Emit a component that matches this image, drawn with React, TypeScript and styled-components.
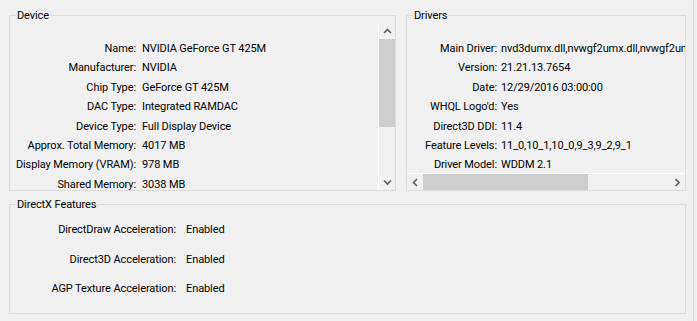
import React from "react";
import styled, { createGlobalStyle } from "styled-components";

const GlobalStyle = createGlobalStyle`
  html, body {
    margin: 0;
    padding: 0;
    background: #f0f0f0;
  }
  body {
    font-family: Roboto, "Liberation Sans", Arial, sans-serif;
    font-size: 11px;
    letter-spacing: -0.1px;
    color: #000;
  }
`;

const Page = styled.div`
  width: 694px;
  height: 321px;
  box-sizing: border-box;
  border-right: 1px solid #dadada;
  padding: 8px 0 0 9px;
  display: grid;
  grid-template-columns: 387px 280px;
  grid-template-rows: auto auto;
  column-gap: 10px;
  row-gap: 6px;
  align-content: start;
`;

const Group = styled.fieldset<{ $span?: boolean }>`
  margin: 0;
  padding: 0;
  min-width: 0;
  border: 1px solid #dcdcdc;
  ${(p) => (p.$span ? "grid-column: 1 / span 2;" : "")}
`;

const Legend = styled.legend`
  margin-left: 6px;
  padding: 0 1px;
  line-height: 15px;
  font-size: 11px;
`;

const ListBox = styled.div`
  height: 167px;
  display: flex;
  flex-direction: column;
  overflow: hidden;
`;

const ListRow = styled.div`
  flex: 1;
  display: flex;
  min-height: 0;
`;

const Rows = styled.div<{ $label: number; $gap: number }>`
  flex: 1;
  min-width: 0;
  overflow: hidden;
  padding-top: 16px;
  display: grid;
  grid-template-columns: ${(p) => p.$label}px max-content;
  column-gap: ${(p) => p.$gap}px;
  grid-auto-rows: 19.4px;
  align-content: start;
  line-height: 19.4px;
  white-space: nowrap;
`;

const Label = styled.div`
  text-align: right;
  white-space: nowrap;
`;

const Value = styled.div`
  white-space: nowrap;
`;

const VScroll = styled.div`
  width: 16px;
  border-left: 1px solid #ffffff;
  display: flex;
  flex-direction: column;
`;

const HScroll = styled.div`
  height: 16px;
  border-top: 1px solid #ffffff;
  display: flex;
  flex-shrink: 0;
`;

const ArrowButton = styled.div`
  width: 16px;
  height: 16px;
  flex-shrink: 0;
  display: flex;
  align-items: center;
  justify-content: center;
`;

const TrackV = styled.div`
  flex: 1;
  display: flex;
  flex-direction: column;
`;

const TrackH = styled.div`
  flex: 1;
  display: flex;
`;

const Thumb = styled.div<{ $length: number; $horizontal?: boolean }>`
  background: #cdcdcd;
  ${(p) =>
    p.$horizontal
      ? `width: ${p.$length}px; height: 16px;`
      : `height: ${p.$length}px; width: 16px;`}
`;

const Features = styled.div`
  height: 101px;
  box-sizing: border-box;
  padding-top: 3px;
  display: grid;
  grid-template-columns: 166px max-content;
  column-gap: 10px;
  grid-auto-rows: 29.5px;
  align-content: start;
  line-height: 29.5px;
`;

type Dir = "up" | "down" | "left" | "right";
const arrowPaths: Record<Dir, string> = {
  up: "M1 5 L4.5 1.5 L8 5",
  down: "M1 1.5 L4.5 5 L8 1.5",
  left: "M5 1 L1.5 4.5 L5 8",
  right: "M1.5 1 L5 4.5 L1.5 8",
};

const Arrow = ({ dir }: { dir: Dir }) => {
  const vertical = dir === "up" || dir === "down";
  return (
    <svg
      width={vertical ? 9 : 7}
      height={vertical ? 7 : 9}
      viewBox={vertical ? "0 0 9 7" : "0 0 7 9"}
    >
      <path d={arrowPaths[dir]} fill="none" stroke="#606060" strokeWidth="1.7" />
    </svg>
  );
};

const device: [string, string][] = [
  ["Name:", "NVIDIA GeForce GT 425M"],
  ["Manufacturer:", "NVIDIA"],
  ["Chip Type:", "GeForce GT 425M"],
  ["DAC Type:", "Integrated RAMDAC"],
  ["Device Type:", "Full Display Device"],
  ["Approx. Total Memory:", "4017 MB"],
  ["Display Memory (VRAM):", "978 MB"],
  ["Shared Memory:", "3038 MB"],
];

const drivers: [string, string][] = [
  ["Main Driver:", "nvd3dumx.dll,nvwgf2umx.dll,nvwgf2umx.dll"],
  ["Version:", "21.21.13.7654"],
  ["Date:", "12/29/2016 03:00:00"],
  ["WHQL Logo'd:", "Yes"],
  ["Direct3D DDI:", "11.4"],
  ["Feature Levels:", "11_0,10_1,10_0,9_3,9_2,9_1"],
  ["Driver Model:", "WDDM 2.1"],
];

const features: [string, string][] = [
  ["DirectDraw Acceleration:", "Enabled"],
  ["Direct3D Acceleration:", "Enabled"],
  ["AGP Texture Acceleration:", "Enabled"],
];

const Pairs = ({ items }: { items: [string, string][] }) => (
  <>
    {items.map(([l, v]) => (
      <React.Fragment key={l}>
        <Label>{l}</Label>
        <Value>{v}</Value>
      </React.Fragment>
    ))}
  </>
);

export default function App() {
  return (
    <>
      <GlobalStyle />
      <Page>
        <Group>
          <Legend>Device</Legend>
          <ListBox>
            <ListRow>
              <Rows $label={126} $gap={6}>
                <Pairs items={device} />
              </Rows>
              <VScroll>
                <ArrowButton>
                  <Arrow dir="up" />
                </ArrowButton>
                <TrackV>
                  <Thumb $length={88} />
                </TrackV>
                <ArrowButton>
                  <Arrow dir="down" />
                </ArrowButton>
              </VScroll>
            </ListRow>
          </ListBox>
        </Group>
        <Group>
          <Legend>Drivers</Legend>
          <ListBox>
            <ListRow>
              <Rows $label={90} $gap={4}>
                <Pairs items={drivers} />
              </Rows>
            </ListRow>
            <HScroll>
              <ArrowButton>
                <Arrow dir="left" />
              </ArrowButton>
              <TrackH>
                <Thumb $horizontal $length={165} />
              </TrackH>
              <ArrowButton>
                <Arrow dir="right" />
              </ArrowButton>
            </HScroll>
          </ListBox>
        </Group>
        <Group $span>
          <Legend>DirectX Features</Legend>
          <Features>
            <Pairs items={features} />
          </Features>
        </Group>
      </Page>
    </>
  );
}
